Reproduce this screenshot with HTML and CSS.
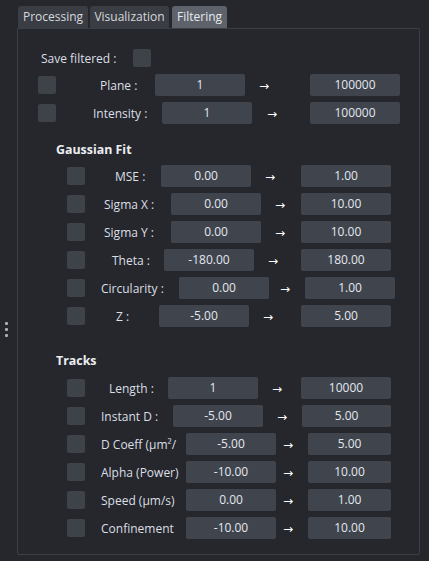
FILE: index.html
```html
<!DOCTYPE html>
<html>
<head>
<meta charset="utf-8">
<link rel="stylesheet" href="styles.css">
</head>
<body>
<div class="handle"><span class="dot"></span><span class="dot"></span><span class="dot"></span></div>
<div class="main">
  <div class="tabs">
    <div class="tab t-proc">Processing</div>
    <div class="tab t-vis">Visualization</div>
    <div class="tab t-filt active">Filtering</div>
  </div>
  <div class="panel">
    <div class="save-row">
      <span class="save-label">Save filtered :</span>
      <span class="cb"></span>
    </div>

    <div class="rows top-rows">
      <div class="row r-plane"><span class="cb"></span><span class="lbl">Plane :</span><span class="fld f1">1</span><span class="arr">→</span><span class="fld f2">100000</span></div>
      <div class="row r-int"><span class="cb"></span><span class="lbl">Intensity :</span><span class="fld f1">1</span><span class="arr">→</span><span class="fld f2">100000</span></div>
    </div>

    <div class="heading h-gauss">Gaussian Fit</div>
    <div class="rows sub-rows">
      <div class="row r-mse"><span class="cb"></span><span class="lbl">MSE :</span><span class="fld f1">0.00</span><span class="arr">→</span><span class="fld f2">1.00</span></div>
      <div class="row r-sig"><span class="cb"></span><span class="lbl">Sigma X :</span><span class="fld f1">0.00</span><span class="arr">→</span><span class="fld f2">10.00</span></div>
      <div class="row r-sig"><span class="cb"></span><span class="lbl">Sigma Y :</span><span class="fld f1">0.00</span><span class="arr">→</span><span class="fld f2">10.00</span></div>
      <div class="row r-theta"><span class="cb"></span><span class="lbl">Theta :</span><span class="fld f1">-180.00</span><span class="arr">→</span><span class="fld f2">180.00</span></div>
      <div class="row r-circ"><span class="cb"></span><span class="lbl">Circularity :</span><span class="fld f1">0.00</span><span class="arr">→</span><span class="fld f2">1.00</span></div>
      <div class="row r-z"><span class="cb"></span><span class="lbl">Z :</span><span class="fld f1">-5.00</span><span class="arr">→</span><span class="fld f2">5.00</span></div>
    </div>

    <div class="heading h-tracks">Tracks</div>
    <div class="rows sub-rows">
      <div class="row r-len"><span class="cb"></span><span class="lbl">Length :</span><span class="fld f1">1</span><span class="arr">→</span><span class="fld f2">10000</span></div>
      <div class="row r-inst"><span class="cb"></span><span class="lbl">Instant D :</span><span class="fld f1">-5.00</span><span class="arr">→</span><span class="fld f2">5.00</span></div>
      <div class="row r-wide"><span class="cb"></span><span class="lbl">D Coeff (µm²/</span><span class="fld f1">-5.00</span><span class="arr">→</span><span class="fld f2">5.00</span></div>
      <div class="row r-wide"><span class="cb"></span><span class="lbl">Alpha (Power)</span><span class="fld f1">-10.00</span><span class="arr">→</span><span class="fld f2">10.00</span></div>
      <div class="row r-wide"><span class="cb"></span><span class="lbl">Speed (µm/s)</span><span class="fld f1">0.00</span><span class="arr">→</span><span class="fld f2">1.00</span></div>
      <div class="row r-wide"><span class="cb"></span><span class="lbl">Confinement</span><span class="fld f1">-10.00</span><span class="arr">→</span><span class="fld f2">10.00</span></div>
    </div>
  </div>
</div>
</body>
</html>
```

FILE: styles.css
```css
* { box-sizing: border-box; }

html, body {
  margin: 0;
  padding: 0;
}

body {
  width: 429px;
  height: 561px;
  background: #25272d;
  color: #dcdfe4;
  font-family: "Open Sans", "Noto Sans", sans-serif;
  font-size: 12px;
  display: flex;
  overflow: hidden;
}

.handle {
  width: 17px;
  flex: none;
  display: flex;
  flex-direction: column;
  align-items: center;
  padding-top: 322px;
  padding-right: 5px;
  gap: 3px;
}

.dot {
  width: 3px;
  height: 3px;
  border-radius: 1px;
  background: #a9adb5;
}

.main {
  display: flex;
  flex-direction: column;
}

.tabs {
  display: flex;
  gap: 2px;
  padding-top: 6px;
  margin-left: 1px;
  height: 28px;
}

.tab {
  height: 22px;
  line-height: 22px;
  border-radius: 3px 3px 0 0;
  background: #3a3d44;
  color: #d6d9de;
  text-align: center;
  white-space: nowrap;
}

.t-proc { width: 70px; }
.t-vis { width: 79px; }
.t-filt { width: 55px; margin-left: 1px; }

.tab.active {
  background: #5d626b;
  color: #e8eaee;
}

.panel {
  width: 403px;
  height: 527px;
  border: 1px solid #3b3e45;
  border-radius: 0 2px 2px 2px;
  padding-top: 20px;
}

.save-row {
  display: flex;
  align-items: center;
  height: 18px;
}

.save-label {
  margin-left: 23px;
  width: 92px;
  flex: none;
  white-space: nowrap;
}

.cb {
  width: 18px;
  height: 18px;
  flex: none;
  border-radius: 2px;
  background: #3e4249;
}

.rows {
  display: flex;
  flex-direction: column;
  gap: 6px;
}

.top-rows {
  margin-top: 7px;
  --cb: 20px;
}

.sub-rows {
  --cb: 49px;
}

.row {
  display: flex;
  align-items: center;
  height: 22px;
  --lm: 0px;
  --fw1: 90px;
  --fw2: 90px;
  --ap: 14px;
}

.row .cb {
  margin-left: var(--cb);
}

.lbl {
  flex: none;
  width: var(--lw);
  padding-left: var(--lp);
  margin-right: var(--lm);
  overflow: hidden;
  white-space: nowrap;
}

.fld {
  flex: none;
  height: 22px;
  line-height: 22px;
  border-radius: 2px;
  background: #40444c;
  color: #e2e8f0;
  text-align: center;
}

.f1 { width: var(--fw1); }
.f2 { width: var(--fw2); }

.arr {
  flex: none;
  width: var(--aw);
  padding-left: var(--ap);
  color: #ffffff;
  font-family: "DejaVu Sans", sans-serif;
  font-size: 12px;
  line-height: 22px;
  padding-top: 1px;
}

.r-plane { --lw: 99px; --lp: 44px; --aw: 65px; --ap: 14px; }
.r-int { --lw: 106px; --lp: 37px; --aw: 58px; --ap: 15px; }
.r-mse { --lw: 76px; --lp: 30px; --aw: 50px; }
.r-sig { --lw: 86px; --lp: 19px; --aw: 40px; }
.r-theta { --lw: 79px; --lp: 27px; --aw: 47px; }
.r-circ { --lw: 94px; --lp: 16px; --aw: 36px; --ap: 11px; }
.r-z { --lw: 74px; --lp: 31px; --aw: 52px; }
.r-len { --lw: 83px; --lp: 24px; --aw: 43px; }
.r-inst { --lw: 88px; --lp: 16px; --aw: 39px; --fw2: 89px; }
.r-wide { --lw: 96px; --lp: 16px; --lm: 5px; --aw: 32px; --ap: 7px; --fw2: 83px; }

.heading {
  margin-left: 38px;
  height: 18px;
  line-height: 18px;
  font-weight: 700;
  font-size: 12.4px;
  color: #eceef1;
}

.h-gauss {
  margin-top: 17px;
  margin-bottom: 6px;
}

.h-tracks {
  margin-top: 25px;
  margin-bottom: 7px;
}
```
